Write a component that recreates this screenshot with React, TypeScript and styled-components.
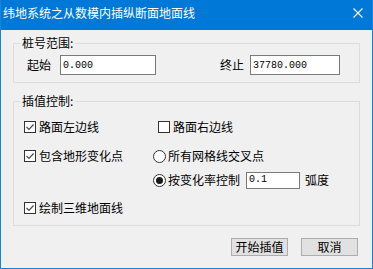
import React from 'react';
import styled, { createGlobalStyle } from 'styled-components';

const GlobalStyle = createGlobalStyle`
  html, body {
    margin: 0;
    padding: 0;
    background: #f0f0f0;
  }
  body {
    font-family: "Noto Sans CJK SC", "Noto Sans", sans-serif;
    font-size: 12px;
    color: #000;
  }
`;

const Window = styled.div`
  width: 373px;
  height: 269px;
  box-sizing: border-box;
  border: 1px solid #1a82d8;
  border-top: none;
  background: #f0f0f0;
  display: flex;
  flex-direction: column;
`;

const TitleBar = styled.div`
  height: 30px;
  background: #0078d7;
  color: #fff;
  display: flex;
  align-items: flex-start;
  justify-content: space-between;
  padding: 5px 9px 0 2px;
  box-sizing: border-box;
  font-size: 12px;
  line-height: 16px;
`;

const CloseIcon = styled.svg`
  width: 10px;
  height: 10px;
  margin-top: 3px;
`;

const Body = styled.div`
  display: flex;
  flex-direction: column;
  padding: 5px 12px 0 12px;
`;

const Group = styled.fieldset<{ $gap?: number }>`
  margin: ${p => p.$gap ?? 0}px 0 0 0;
  padding: 0;
  border: 1px solid #dcdcdc;
  min-width: 0;
`;

const Legend = styled.legend`
  margin-left: 6px;
  padding: 0 2px;
  font-size: 12px;
  line-height: 16px;
`;

const RangeRow = styled.div`
  display: flex;
  align-items: center;
  padding: 4px 0 7px 13px;
`;

const FieldLabel = styled.span<{ $left?: number; $right?: number }>`
  margin-left: ${p => p.$left ?? 0}px;
  margin-right: ${p => p.$right ?? 6}px;
  width: 24px;
  line-height: 16px;
`;

const TextBox = styled.div<{ $w: number; $h?: number; $left?: number }>`
  width: ${p => p.$w}px;
  height: ${p => p.$h ?? 20}px;
  margin-left: ${p => p.$left ?? 0}px;
  box-sizing: border-box;
  border: 1px solid #7a7a7a;
  background: #fff;
  padding-left: 2px;
  display: flex;
  align-items: center;
  font-family: "Liberation Mono", monospace;
  font-size: 10px;
`;

const OptionRows = styled.div`
  display: flex;
  flex-direction: column;
  padding: 8px 0 7px 10px;
`;

const Row = styled.div<{ $gap?: number }>`
  display: flex;
  align-items: center;
  height: 20px;
  margin-top: ${p => p.$gap ?? 0}px;
`;

const Cell = styled.div<{ $left?: number }>`
  display: flex;
  align-items: center;
  margin-left: ${p => p.$left ?? 0}px;
  line-height: 16px;
  white-space: nowrap;
`;

const Box = styled.span`
  width: 12px;
  height: 12px;
  box-sizing: border-box;
  border: 1px solid #333;
  background: #fff;
  margin-right: 3px;
  display: flex;
  align-items: center;
  justify-content: center;
`;

const Radio = styled.span`
  width: 13px;
  height: 13px;
  box-sizing: border-box;
  border: 1px solid #333;
  border-radius: 50%;
  background: #fff;
  margin-right: 2px;
  display: flex;
  align-items: center;
  justify-content: center;
`;

const Dot = styled.span`
  width: 7px;
  height: 7px;
  border-radius: 50%;
  background: #1a1a1a;
`;

const Unit = styled.span`
  margin-left: 5px;
`;

const Buttons = styled.div`
  display: flex;
  justify-content: flex-end;
  gap: 13px;
  margin-top: 12px;
  padding-right: 2px;
`;

const Button = styled.button`
  width: 57px;
  height: 18px;
  box-sizing: border-box;
  border: 1px solid #adadad;
  background: #e1e1e1;
  padding: 0;
  font-family: "Noto Sans CJK SC", sans-serif;
  font-size: 12px;
  line-height: 16px;
  color: #000;
`;

const Check: React.FC<{ checked?: boolean; label: string; left?: number }> = ({ checked, label, left }) => (
  <Cell $left={left}>
    <Box>
      {checked && (
        <svg width="10" height="10" viewBox="0 0 10 10">
          <path d="M1.5 5 L4 7.5 L8.5 2.5" fill="none" stroke="#4a4a4a" strokeWidth="1.2" />
        </svg>
      )}
    </Box>
    {label}
  </Cell>
);

const RadioItem: React.FC<{ selected?: boolean; children: React.ReactNode; left?: number }> = ({ selected, children, left }) => (
  <Cell $left={left}>
    <Radio>{selected && <Dot />}</Radio>
    {children}
  </Cell>
);

const App: React.FC = () => (
  <>
    <GlobalStyle />
    <Window>
      <TitleBar>
        <span>纬地系统之从数模内插纵断面地面线</span>
        <CloseIcon viewBox="0 0 10 10">
          <path d="M0.5 0.5 L9.5 9.5 M9.5 0.5 L0.5 9.5" stroke="#fff" strokeWidth="1.1" />
        </CloseIcon>
      </TitleBar>
      <Body>
        <Group>
          <Legend>桩号范围:</Legend>
          <RangeRow>
            <FieldLabel $right={9}>起始</FieldLabel>
            <TextBox $w={96}>0.000</TextBox>
            <FieldLabel $left={64}>终止</FieldLabel>
            <TextBox $w={90}>37780.000</TextBox>
          </RangeRow>
        </Group>
        <Group $gap={10}>
          <Legend>插值控制:</Legend>
          <OptionRows>
            <Row>
              <Check checked label="路面左边线" />
              <Check label="路面右边线" left={59} />
            </Row>
            <Row $gap={9}>
              <Check checked label="包含地形变化点" />
              <RadioItem left={30}>所有网格线交叉点</RadioItem>
            </Row>
            <Row $gap={4}>
              <RadioItem left={129} selected>
                按变化率控制
                <TextBox $w={54} $h={17} $left={6}>0.1</TextBox>
                <Unit>弧度</Unit>
              </RadioItem>
            </Row>
            <Row $gap={8}>
              <Check checked label="绘制三维地面线" />
            </Row>
          </OptionRows>
        </Group>
        <Buttons>
          <Button>开始插值</Button>
          <Button>取消</Button>
        </Buttons>
      </Body>
    </Window>
  </>
);

export default App;
